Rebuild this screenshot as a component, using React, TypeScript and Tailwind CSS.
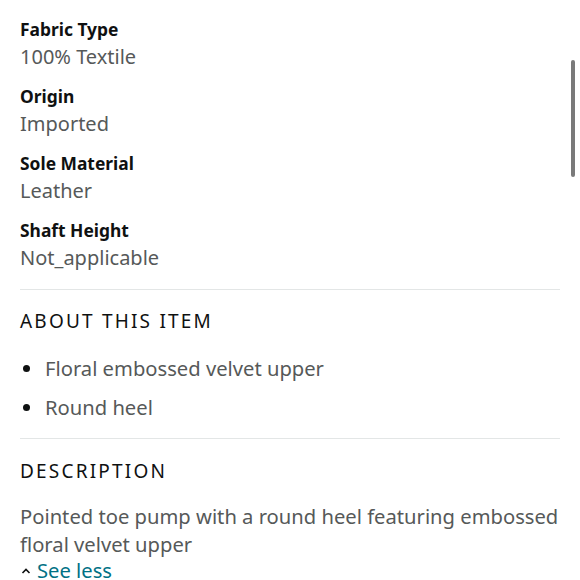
import React from 'react';

const specs = [
  { label: 'Fabric Type', value: '100% Textile' },
  { label: 'Origin', value: 'Imported' },
  { label: 'Sole Material', value: 'Leather' },
  { label: 'Shaft Height', value: 'Not_applicable' },
];

const bullets = ['Floral embossed velvet upper', 'Round heel'];

export default function App() {
  return (
    <div
      className="relative w-[580px] h-[580px] overflow-hidden bg-white"
      style={{ fontFamily: '"Noto Sans", "Open Sans", sans-serif' }}
    >
      <div className="px-5 pt-4">
        {/* product details */}
        <div className="flex flex-col gap-[13px] pb-[18px]">
          {specs.map((s) => (
            <div key={s.label} className="flex flex-col">
              <span className="text-[17.4px] leading-[27px] font-bold text-[#0f1111]">{s.label}</span>
              <span className="text-[20px] leading-[27px] text-[#565959]">{s.value}</span>
            </div>
          ))}
        </div>

        <div className="h-px bg-[#e3e6e6]" />

        {/* about */}
        <div className="pt-[17px] pb-[17px]">
          <h2 className="text-[19px] leading-[28px] tracking-[2.2px] text-[#0f1111]">ABOUT THIS ITEM</h2>
          <ul className="mt-[19px] flex flex-col gap-[11px]">
            {bullets.map((b) => (
              <li key={b} className="flex items-center gap-[15px] text-[20.2px] leading-[28px] text-[#565959]">
                <span className="ml-[3px] w-[7px] h-[7px] rounded-full bg-[#0f1111]" />
                {b}
              </li>
            ))}
          </ul>
        </div>

        <div className="h-px bg-[#e3e6e6]" />

        {/* description */}
        <div className="pt-[18px]">
          <h2 className="text-[19px] leading-[28px] tracking-[2.2px] text-[#0f1111]">DESCRIPTION</h2>
          <p className="mt-[17px] text-[20.2px] leading-[28px] text-[#565959]">
            Pointed toe pump with a round heel featuring embossed floral velvet upper
          </p>
          <button className="flex items-center gap-[6px] text-[20.2px] leading-[25px] text-[#007185]">
            <svg width="10" height="8" viewBox="0 0 10 8" className="ml-[1px]">
              <path d="M1.5 6 L5 2.5 L8.5 6" fill="none" stroke="#0f1111" strokeWidth="1.6" />
            </svg>
            See less
          </button>
        </div>
      </div>

      {/* scroll indicator */}
      <div className="absolute right-[5px] top-[60px] w-[4px] h-[117px] rounded-full bg-[#7a7a7a]" />
    </div>
  );
}
